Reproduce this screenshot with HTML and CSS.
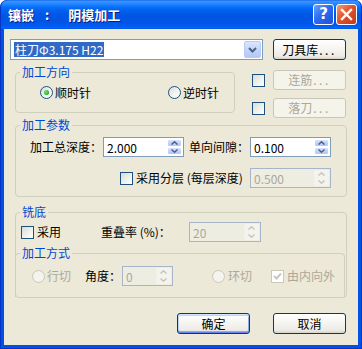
FILE: index.html
```html
<!DOCTYPE html>
<html lang="zh-CN">
<head>
<meta charset="utf-8">
<title>镶嵌 ： 阴模加工</title>
<link rel="stylesheet" href="styles.css">
</head>
<body>
<div class="window">
  <div class="titlebar">
    <div class="title"><span>镶嵌</span><span class="colon">:</span><span class="t2">阴模加工</span></div>
    <div class="tb-buttons">
      <span class="tb-btn help">?</span>
      <span class="tb-btn close"><svg width="13" height="13" viewBox="0 0 13 13"><path d="M2 2 L11 11 M11 2 L2 11" stroke="#fff" stroke-width="2.4" stroke-linecap="square"/></svg></span>
    </div>
  </div>
  <div class="frame">
    <div class="client">
      <div class="row1">
        <div class="combo">
          <div class="combo-text"><span class="sel">柱刀Φ3.175 H22</span></div>
          <span class="drop"><svg width="9" height="6" viewBox="0 0 9 6"><path d="M1 1 L4.5 4.5 L8 1" fill="none" stroke="#4D6185" stroke-width="2"/></svg></span>
        </div>
        <button class="btn">刀具库<span class="dots">...</span></button>
      </div>

      <div class="row2">
        <fieldset class="grp dir">
          <legend>加工方向</legend>
          <div class="dir-row">
            <span class="radio"><span class="rb on"></span><span class="rl">顺时针</span></span>
            <span class="radio r2"><span class="rb"></span><span class="rl">逆时针</span></span>
          </div>
        </fieldset>
        <div class="side">
          <div class="side-row"><span class="cb"></span><button class="btn dis">连筋<span class="dots">...</span></button></div>
          <div class="side-row"><span class="cb"></span><button class="btn dis">落刀<span class="dots">...</span></button></div>
        </div>
      </div>

      <fieldset class="grp params">
        <legend>加工参数</legend>
        <div class="prow a">
          <span class="lbl l1">加工总深度：</span>
          <div class="edit w81"><span class="val">2.000</span><span class="spin"><span class="sb"><svg width="7" height="4" viewBox="0 0 7 4"><path d="M0.5 3.5 L3.5 0.8 L6.5 3.5" fill="none" stroke="#4D6185" stroke-width="1.5"/></svg></span><span class="sb"><svg width="7" height="4" viewBox="0 0 7 4"><path d="M0.5 0.5 L3.5 3.2 L6.5 0.5" fill="none" stroke="#4D6185" stroke-width="1.5"/></svg></span></span></div>
          <span class="lbl l2">单向间隙：</span>
          <div class="edit w81"><span class="val">0.100</span><span class="spin"><span class="sb"><svg width="7" height="4" viewBox="0 0 7 4"><path d="M0.5 3.5 L3.5 0.8 L6.5 3.5" fill="none" stroke="#4D6185" stroke-width="1.5"/></svg></span><span class="sb"><svg width="7" height="4" viewBox="0 0 7 4"><path d="M0.5 0.5 L3.5 3.2 L6.5 0.5" fill="none" stroke="#4D6185" stroke-width="1.5"/></svg></span></span></div>
        </div>
        <div class="prow b">
          <span class="cb"></span><span class="cbl">采用分层 (每层深度)</span>
          <div class="edit w81 off push"><span class="val">0.500</span><span class="spin"><span class="sb"><svg width="7" height="4" viewBox="0 0 7 4"><path d="M0.5 3.5 L3.5 0.8 L6.5 3.5" fill="none" stroke="#C9C7BA" stroke-width="1.5"/></svg></span><span class="sb"><svg width="7" height="4" viewBox="0 0 7 4"><path d="M0.5 0.5 L3.5 3.2 L6.5 0.5" fill="none" stroke="#C9C7BA" stroke-width="1.5"/></svg></span></span></div>
        </div>
      </fieldset>

      <fieldset class="grp mill">
        <legend>铣底</legend>
        <div class="mrow">
          <span class="cb"></span><span class="cbl">采用</span>
          <span class="lbl l3">重叠率 (%)：</span>
          <div class="edit w72 off"><span class="val">20</span><span class="spin"><span class="sb"><svg width="7" height="4" viewBox="0 0 7 4"><path d="M0.5 3.5 L3.5 0.8 L6.5 3.5" fill="none" stroke="#C9C7BA" stroke-width="1.5"/></svg></span><span class="sb"><svg width="7" height="4" viewBox="0 0 7 4"><path d="M0.5 0.5 L3.5 3.2 L6.5 0.5" fill="none" stroke="#C9C7BA" stroke-width="1.5"/></svg></span></span></div>
        </div>
        <fieldset class="grp mode">
          <legend>加工方式</legend>
          <div class="moderow">
            <span class="rb off"></span><span class="rl dim m2">行切</span>
            <span class="lbl l4">角度：</span>
            <div class="edit w51 off"><span class="val">0</span><span class="spin"><span class="sb"><svg width="7" height="4" viewBox="0 0 7 4"><path d="M0.5 3.5 L3.5 0.8 L6.5 3.5" fill="none" stroke="#C9C7BA" stroke-width="1.5"/></svg></span><span class="sb"><svg width="7" height="4" viewBox="0 0 7 4"><path d="M0.5 0.5 L3.5 3.2 L6.5 0.5" fill="none" stroke="#C9C7BA" stroke-width="1.5"/></svg></span></span></div>
            <span class="rb off r-ring"></span><span class="rl dim m3">环切</span>
            <span class="cb off checked c-io"><svg width="11" height="11" viewBox="0 0 11 11"><path d="M2 5 L4.5 7.5 L9 2.5" fill="none" stroke="#C9C7BA" stroke-width="2"/></svg></span><span class="rl dim m3">由内向外</span>
          </div>
        </fieldset>
      </fieldset>

      <div class="actions">
        <button class="btn default">确定</button>
        <button class="btn">取消</button>
      </div>
    </div>
  </div>
</div>
</body>
</html>
```

FILE: styles.css
```css
* { box-sizing: border-box; }
html, body { margin: 0; padding: 0; background: #ffffff; }
body {
  font-family: "Noto Sans CJK SC", "Noto Sans", sans-serif;
  font-size: 12px;
  color: #000;
  line-height: 14px;
}

.window {
  width: 362px;
  height: 349px;
  display: flex;
  flex-direction: column;
  border-radius: 7px 7px 0 0;
  overflow: hidden;
  background: #0055E5;
}

.titlebar {
  height: 29px;
  flex: none;
  display: flex;
  align-items: center;
  padding: 0 5px 0 8px;
  background: linear-gradient(180deg, #0A5BE0 0px, #3D95FF 1px, #2E8BFF 3px, #167EFF 5px, #0670F9 7px, #0263EF 10px, #0058E6 14px, #0055E3 19px, #0056E8 23px, #005BF2 26px, #0067FC 28px, #0050DA 29px);
  border-radius: 7px 7px 0 0;
  box-shadow: inset 1px 0 #0833C8, inset -1px 0 #0833C8;
}
.title {
  flex: 1;
  color: #fff;
  font-weight: bold;
  font-size: 13px;
  line-height: 16px;
  text-shadow: 1px 1px #0F1A8A;
  display: flex;
  padding-top: 1px;
}
.title .colon { margin-left: 11px; }
.title .t2 { margin-left: 19px; }

.tb-buttons { display: flex; gap: 2px; }
.tb-btn {
  width: 21px;
  height: 21px;
  border: 1px solid #fff;
  border-radius: 3px;
  display: flex;
  align-items: center;
  justify-content: center;
  color: #fff;
}
.help {
  background: linear-gradient(135deg, #6BA2FF 0%, #2A6CF0 45%, #1B53DA 100%);
  font-family: "DejaVu Sans", sans-serif;
  font-weight: bold;
  font-size: 15px;
  line-height: 19px;
}
.close {
  background: linear-gradient(135deg, #F39A7E 0%, #E0542C 45%, #C2391A 100%);
}

.frame {
  flex: 1;
  display: flex;
  padding: 0 4px 4px;
  background: #0053E0;
  box-shadow: inset 1px 0 #0833C8, inset -1px 0 #0833C8, inset 0 -1px #0833C8;
}
.client {
  flex: 1;
  background: #ECE9D8;
  padding: 10px 12px 0 6px;
  display: flex;
  flex-direction: column;
}

/* row 1 */
.row1 { display: flex; height: 21px; }
.combo {
  width: 253px;
  height: 21px;
  border: 1px solid #7F9DB9;
  background: #fff;
  display: flex;
  padding: 1px;
}
.combo-text { flex: 1; padding: 1px 0 0 2px; }
.sel {
  display: inline-block;
  background: #316AC5;
  color: #fff;
  line-height: 15px;
  padding: 0 1px;
}
.drop {
  width: 17px;
  height: 17px;
  border: 1px solid #B9CCF8;
  border-radius: 2px;
  background: linear-gradient(180deg, #DCE6FE 0%, #C3D4FC 50%, #B4C8F7 100%);
  display: flex;
  align-items: center;
  justify-content: center;
}
.row1 .btn { margin-left: 10px; }

.btn {
  width: 73px;
  height: 21px;
  padding: 0;
  border: 1px solid #003C74;
  border-radius: 3px;
  background: linear-gradient(180deg, #FFFFFF 0%, #F7F6F2 40%, #ECEBE6 85%, #D8D2C7 100%);
  font-family: inherit;
  font-size: 12px;
  line-height: 14px;
  color: #000;
  display: flex;
  align-items: center;
  justify-content: center;
}
.btn .dots { letter-spacing: 2.5px; margin-left: 1px; }
.btn.dis {
  height: 20px;
  border-color: #C9C7BA;
  background: #F5F4EA;
  color: #ACA899;
}
.btn.default {
  box-shadow: inset 0 1px #CEE7FF, inset 0 2px #BCD4F6, inset 0 -1px #6982EE, inset 0 -2px #89ADE4, inset 1px 0 #BCD4F6, inset -1px 0 #89ADE4;
}

/* group boxes */
.grp {
  margin: 0;
  padding: 0;
  border: 1px solid #D0D0BF;
  border-radius: 4px;
  min-width: 0;
}
.grp legend {
  margin-left: 4px;
  padding: 0 2px;
  color: #0046D5;
  line-height: 14px;
}

.row2 { display: flex; margin: 5px 0 0 5px; }
.dir { width: 220px; align-self: flex-start; padding-bottom: 13px; }
.dir-row { display: flex; align-items: center; margin-top: 7px; padding-left: 24px; height: 13px; }
.radio { display: flex; align-items: center; }
.radio.r2 { margin-left: 77px; }
.rl { margin-left: 2px; }
.radio .rl { margin-left: 2px; }

.rb {
  width: 13px;
  height: 13px;
  flex: none;
  border-radius: 50%;
  border: 1px solid #1C5180;
  background: linear-gradient(135deg, #DCDCD7 0%, #F5F5F2 60%, #FFFFFF 100%);
  display: flex;
  align-items: center;
  justify-content: center;
}
.rb.on::after {
  content: "";
  width: 5px;
  height: 5px;
  border-radius: 50%;
  background: radial-gradient(circle at 40% 40%, #7BE57A 0%, #2FB32F 60%, #1D8C1D 100%);
}
.rb.off {
  border-color: #CAC8BB;
  background: #F4F3EE;
}

.cb {
  width: 13px;
  height: 13px;
  flex: none;
  border: 1px solid #1C5180;
  background: linear-gradient(135deg, #DCDCD7 0%, #F2F2EE 60%, #FFFFFF 100%);
  display: flex;
  align-items: center;
  justify-content: center;
}
.cb.off {
  border-color: #CAC8BB;
  background: #FFFFFF;
}
.cbl { margin-left: 3px; }

.side { display: flex; flex-direction: column; gap: 8px; margin: 5px 0 0 17px; }
.side-row { display: flex; align-items: center; height: 20px; }
.side-row .btn { margin-left: 8px; }

/* params */
.params { width: 332px; margin: 0 -1px 0 5px; padding-bottom: 8px; }
.prow { display: flex; align-items: center; height: 20px; }
.prow.a { margin-top: 5px; padding-left: 14px; }
.prow.b { margin-top: 11px; padding-left: 104px; padding-right: 15px; }
.lbl { white-space: nowrap; }
.l1 { width: 73px; }
.l2 { width: 61px; margin-left: 5px; }
.push { margin-left: auto; }

.edit {
  height: 20px;
  border: 1px solid #7F9DB9;
  background: #fff;
  display: flex;
  padding: 1px;
}
.edit .val { flex: 1; padding: 2px 0 0 2px; line-height: 14px; }
.w81 { width: 81px; }
.w72 { width: 72px; }
.w51 { width: 51px; }
.edit.off { border-color: #A6B5C9; background: #EEEDE2; color: #ACA899; }

.spin { width: 15px; display: flex; flex-direction: column; }
.sb {
  flex: 1;
  border: 1px solid #fff;
  border-radius: 2px;
  background: linear-gradient(180deg, #D8E3FD 0%, #C1D3FB 50%, #B2C6F6 100%);
  display: flex;
  align-items: center;
  justify-content: center;
}
.edit.off .sb { background: #F4F3EE; border-color: #F4F3EE; }

/* mill */
.mill { width: 332px; margin: 8px -1px 0 5px; padding: 0; }
.mrow { display: flex; align-items: center; height: 20px; margin-top: 3px; padding-left: 5px; }
.l3 { width: 88px; margin-left: 40px; }

.mode { width: 330px; margin: 4px 0 0 -1px; border-bottom: none; border-radius: 4px 4px 0 0; padding-bottom: 11px; }
.moderow { display: flex; align-items: center; height: 20px; margin-top: 6px; padding-left: 16px; }
.dim { color: #ACA899; }
.rl.m2 { margin-left: 2px; }
.l4 { width: 37px; margin-left: 14px; }
.r-ring { margin-left: 39px; }
.rl.m3 { margin-left: 3px; }
.c-io { margin-left: 19px; }

.actions { display: flex; justify-content: flex-end; gap: 23px; margin-top: 15px; }
```
